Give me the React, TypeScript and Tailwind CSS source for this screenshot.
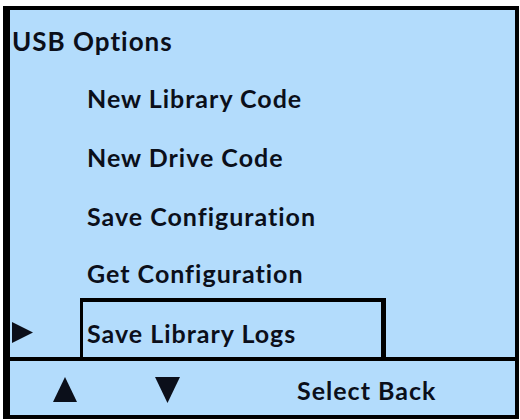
const items = [
  "New Library Code",
  "New Drive Code",
  "Save Configuration",
];

function Tri({ dir, className }: { dir: "up" | "down" | "right"; className: string }) {
  const pts =
    dir === "up" ? "12,0 24,25 0,25" : dir === "down" ? "0,0 24,0 12,25" : "0,0 21,10.5 0,21";
  const vb = dir === "right" ? "0 0 21 21" : "0 0 24 25";
  return (
    <svg viewBox={vb} className={className}>
      <polygon points={pts} fill="#0b0f1a" />
    </svg>
  );
}

export default function App() {
  return (
    <div
      className="w-[520px] h-[420px] bg-white pl-[3px] pt-[6px] pr-[1px] pb-[1px]"
      style={{ fontFamily: "Lato, 'Open Sans', sans-serif" }}
    >
      <div className="w-full h-full border-black border-l-[7px] border-t-4 border-r-4 border-b-4 bg-[#b3dcfc] flex flex-col text-[#0b0f1a] font-bold text-[25px] tracking-[1px]">
        {/* Menu */}
        <div className="h-[347px] shrink-0 flex flex-col">
          <div className="h-[58px] pl-[2px] pt-[5px] leading-[53px] text-[26px]">USB Options</div>
          {items.map((label) => (
            <div key={label} className="h-[59px] pt-[1px] leading-[58px] pl-[77px]">
              {label}
            </div>
          ))}
          <div className="h-[53px] pt-[3px] leading-[50px] pl-[77px]">Get Configuration</div>
          <div className="h-[59px] flex">
            <div className="w-[70px] pl-[2px] pt-[24px]">
              <Tri dir="right" className="w-[21px] h-[21px]" />
            </div>
            <div className="w-[306px] h-[59px] border-black border-l-[3px] border-t-4 border-r-[5px] pl-[4px] pt-[7px] leading-[48px]">
              Save Library Logs
            </div>
          </div>
        </div>
        {/* Footer */}
        <div className="h-[58px] shrink-0 border-t-4 border-black flex items-start">
          <div className="w-[43px]" />
          <Tri dir="up" className="w-[24px] h-[25px] mt-[16px]" />
          <div className="w-[78px]" />
          <Tri dir="down" className="w-[25px] h-[26px] mt-[16px]" />
          <div className="ml-[117px] leading-[50px] pt-[4px]">Select Back</div>
        </div>
      </div>
    </div>
  );
}
